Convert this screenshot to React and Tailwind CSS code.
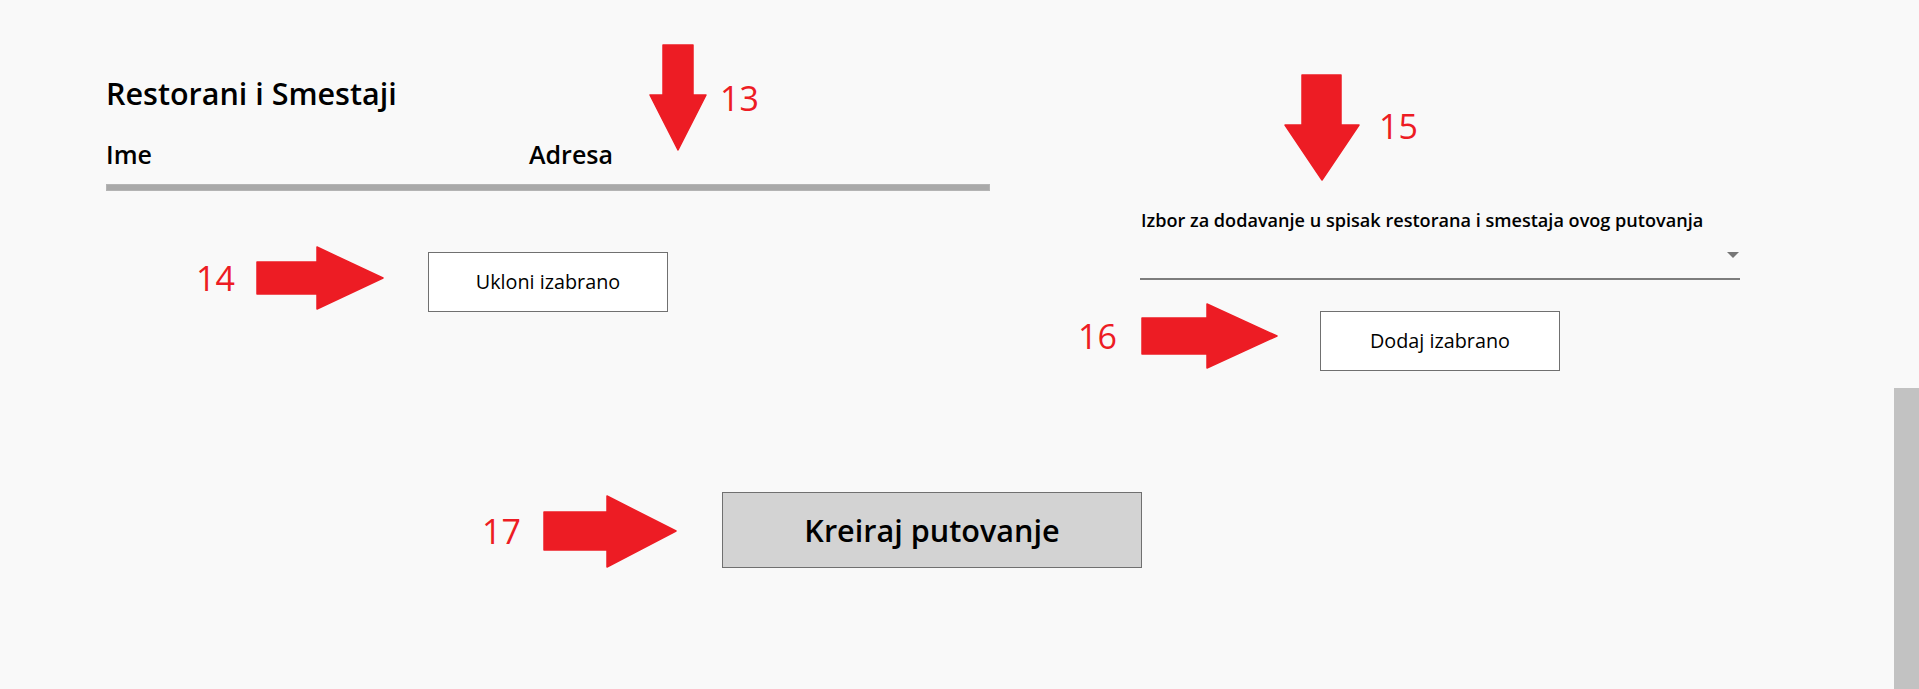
import React from 'react'

// red annotation arrows drawn over the form (screenshot markup)
const ARROWS = [
  '663,45 693,45 693,95 706,95 678,150 650,95 663,95',
  '257,262 317,262 317,247 383,278 317,309 317,294 257,294',
  '1302,75 1341,75 1341,125 1359,125 1322,180 1285,125 1302,125',
  '1142,318 1207,318 1207,304 1277,336 1207,368 1207,354 1142,354',
  '544,512 607,512 607,496 676,531 607,567 607,550 544,550',
]

const LABELS = [
  { n: '13', cls: 'left-[720px] top-[81px]' },
  { n: '14', cls: 'left-[196px] top-[261px]' },
  { n: '15', cls: 'left-[1379px] top-[109px]' },
  { n: '16', cls: 'left-[1078px] top-[319px]' },
  { n: '17', cls: 'left-[482px] top-[514px]' },
]

export default function App() {
  return (
    <div className="relative w-[1919px] h-[689px] overflow-hidden bg-[#f9f9f9] text-black flex font-['Open_Sans',sans-serif]">
      {/* Page content */}
      <div className="flex-1 flex flex-col pl-[106px] pt-[78px]">
        <div className="flex items-start">
          {/* Left: list of restaurants */}
          <div className="w-[884px] flex flex-col">
            <h2 className="text-[30.5px] leading-none font-semibold">Restorani i Smestaji</h2>
            <div className="flex mt-[33px] text-[25px] leading-none font-semibold">
              <div className="w-[423px]">Ime</div>
              <div>Adresa</div>
            </div>
            <div className="mt-[17px] h-[7px] bg-[#a9a9a9] border border-[#b4b4b4]" />
            <button className="mt-[61px] ml-[322px] w-[240px] h-[60px] bg-white border border-[#707070] flex items-center justify-center text-[19.8px] leading-none">
              Ukloni izabrano
            </button>
          </div>

          {/* Right: picker */}
          <div className="ml-[150px] w-[600px] flex flex-col pt-[133px]">
            <label className="text-[18.1px] leading-none font-semibold pl-[1px]">
              Izbor za dodavanje u spisak restorana i smestaja ovog putovanja
            </label>
            <div className="h-[51px] border-b-2 border-[#7d7d7d] flex items-center justify-end pr-[1px] pt-[2px]">
              <div className="w-0 h-0 border-l-[6px] border-r-[6px] border-t-[6px] border-l-transparent border-r-transparent border-t-[#777777]" />
            </div>
            <button className="mt-[31px] ml-[180px] w-[240px] h-[60px] bg-white border border-[#707070] flex items-center justify-center text-[19.8px] leading-none">
              Dodaj izabrano
            </button>
          </div>
        </div>

        <button className="mt-[121px] ml-[616px] w-[420px] h-[76px] bg-[#d3d3d3] border border-[#707070] flex items-center justify-center text-[30.6px] leading-none font-semibold">
          Kreiraj putovanje
        </button>
      </div>

      {/* Scrollbar */}
      <div className="w-[25px] flex flex-col">
        <div className="h-[388px]" />
        <div className="flex-1 bg-[#c2c2c2]" />
      </div>

      {/* Annotations */}
      <svg className="absolute inset-0 pointer-events-none" width="1919" height="689" viewBox="0 0 1919 689">
        {ARROWS.map((p, i) => (
          <polygon key={i} points={p} fill="#ed1c24" stroke="#ed1c24" strokeWidth="1.5" strokeLinejoin="round" />
        ))}
      </svg>
      {LABELS.map(l => (
        <div key={l.n} className={`absolute ${l.cls} text-[34px] leading-none text-[#ed1c24]`}>{l.n}</div>
      ))}
    </div>
  )
}
